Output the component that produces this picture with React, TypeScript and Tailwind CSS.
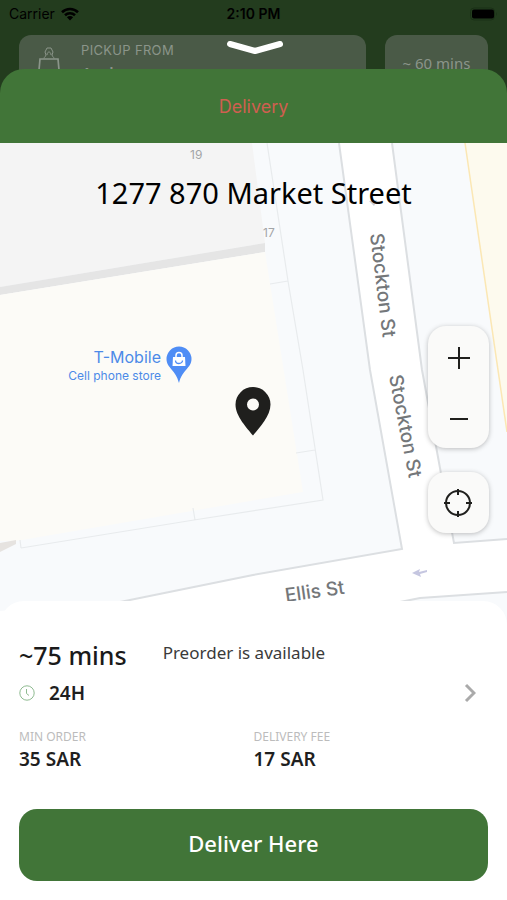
import type { ReactNode } from "react";

type StatProps = {
  label: string;
  value: string;
};

function WifiIcon() {
  return (
    <svg viewBox="0 0 18 14" className="h-[14px] w-[18px]" aria-hidden="true">
      <g fill="none" stroke="#000" strokeWidth="2.6">
        <path d="M1 5.2a11.6 11.6 0 0 1 16 0" />
        <path d="M4 8.3a7.3 7.3 0 0 1 10 0" />
      </g>
      <path d="M9 13.4 5.9 10.3a4.4 4.4 0 0 1 6.2 0z" fill="#000" />
    </svg>
  );
}

function BatteryIcon() {
  return (
    <svg viewBox="0 0 28 14" className="h-[14px] w-[28px]" aria-hidden="true">
      <rect x="0.5" y="1" width="24" height="12" rx="3.5" fill="none" stroke="#1a3016" />
      <rect x="2" y="2.5" width="22" height="9" rx="2" fill="#000" />
      <path d="M26 5v4q1.5-2 0-4z" fill="#1a3016" />
    </svg>
  );
}

function BagIcon() {
  return (
    <svg viewBox="0 0 24 36" className="h-9 w-6" fill="none" stroke="#8b958a" aria-hidden="true">
      <path d="M3 12h18l2 22H1z" strokeWidth="1.7" />
      <path d="M7 11.5c0-1.5 1.5-1.5 2-3.5l-1-3 2-4h4l2 4-1 3c.5 2 2 2 2 3.5" strokeWidth="1" />
      <path d="M10 8c0-2 1-3 2-3s2 1 2 3" strokeWidth="1" />
    </svg>
  );
}

function MapCanvas() {
  return (
    <svg
      viewBox="0 0 507 482"
      preserveAspectRatio="xMidYMin slice"
      className="absolute inset-0 h-full w-full"
      aria-hidden="true"
    >
      <rect width="507" height="482" fill="#f8fafc" />

      {/* Buildings */}
      <path d="M0 0h252l13 100L0 144z" fill="#f4f4f4" />
      <path d="M0 144l265-44v9L0 152z" fill="#e5e5e5" />
      <path d="M0 152l265-43 38 240L16 398H0z" fill="#fcfbf7" />
      <path d="M0 400l16-3v4L0 409z" fill="#e6e3e0" />
      <path d="M465 0l42 289V0z" fill="#fdfaee" />
      <path d="M465 0l42 289" fill="none" stroke="#fbe7b4" strokeWidth="1.5" />

      {/* Parcel outlines */}
      <path
        d="M267 0l21 138 15 89 20 130-129 20-173 28M270 141l18-3M296 310l19-3M193 365l2 12M20 397l1 8"
        fill="none"
        stroke="#e8ebed"
        strokeWidth="1.2"
      />

      {/* Streets */}
      <path
        d="M339 0h53l30 227 33 173 52-4v53l-87 6-18 4v23H0v-14l120-10 133-26 149-26-32-179z"
        fill="#ffffff"
      />
      <path
        d="M339 0l31 227 32 179-149 26-133 27-30 7M392 0l30 227 18 98 14 75 53-4M400 459l20-4 87-6"
        fill="none"
        stroke="#dcdfe2"
        strokeWidth="2"
      />

      {/* One-way arrows */}
      <path d="M412 430l8-4-1 3 8-2v2l-7 2 1 3z" fill="#c5c6e0" />
      <path d="M369 58l8-1-3 6z" fill="#c9ccd6" />

      <g className="font-['Inter',sans-serif] font-medium" fill="#74777a">
        <text fontSize="19" transform="translate(370 91) rotate(83)">
          Stockton St
        </text>
        <text fontSize="19" transform="translate(389 233) rotate(79)">
          Stockton St
        </text>
        <text fontSize="19" transform="translate(286 459) rotate(-8)">
          Ellis St
        </text>
      </g>
      <g className="font-['Inter',sans-serif]" fill="#a3a5a7" fontSize="12">
        <text x="190" y="16">
          19
        </text>
        <text x="263" y="94">
          17
        </text>
      </g>

      {/* Shop label and pin */}
      <g className="font-['Inter',sans-serif]" fill="#4c8ae8" textAnchor="end">
        <text x="161" y="220" fontSize="16">
          T-Mobile
        </text>
        <text x="161" y="237" fontSize="12">
          Cell phone store
        </text>
      </g>
      <path
        d="M179 203.5a12.5 12.5 0 0 1 12.5 12.5c0 9-9.5 11-12.5 24-3-13-12.5-15-12.5-24a12.5 12.5 0 0 1 12.5-12.5z"
        fill="#4f8df5"
      />
      <path d="M173 214h12l.5 9h-13z" fill="#fff" />
      <path d="M176 214.5v-2a3 3 0 0 1 6 0v2" fill="none" stroke="#fff" strokeWidth="1.5" />
      <path d="M175.5 217.5a3.5 3 0 0 0 7 0" fill="none" stroke="#4f8df5" strokeWidth="1.3" />

      {/* Drop-off pin */}
      <path
        d="M253 244a17.5 17.5 0 0 1 17.5 17.5c0 12-12 24-17.5 31-5.5-7-17.5-19-17.5-31A17.5 17.5 0 0 1 253 244zm0 11.5a6 6 0 1 0 0 12 6 6 0 0 0 0-12z"
        fill="#1f1f1d"
      />
    </svg>
  );
}

function MapButton({ label, children }: { label: string; children: ReactNode }) {
  return (
    <button
      type="button"
      aria-label={label}
      className="flex h-[61px] w-[61px] items-center justify-center text-[#1f1f1d]"
    >
      <svg
        viewBox="0 0 30 30"
        className="h-[30px] w-[30px]"
        fill="none"
        stroke="currentColor"
        strokeWidth="2"
        aria-hidden="true"
      >
        {children}
      </svg>
    </button>
  );
}

function Stat({ label, value }: StatProps) {
  return (
    <div>
      <dt className="text-[12px] leading-4 text-[#bcbcbc]">{label}</dt>
      <dd className="text-[19px] leading-7 font-semibold text-[#1f1f1f]">{value}</dd>
    </div>
  );
}

export default function App() {
  return (
    <div className="flex min-h-screen flex-col bg-[#233c1e] font-['Noto_Sans',sans-serif]">
      {/* Status bar */}
      <div className="grid h-[35px] grid-cols-3 items-start px-[9px] pt-1 font-['Inter',sans-serif] text-[14px] leading-5 text-black">
        <div className="flex items-center gap-[6px]">
          <span>Carrier</span>
          <WifiIcon />
        </div>
        <span className="text-center font-semibold">2:10 PM</span>
        <div className="flex h-5 items-center justify-end">
          <BatteryIcon />
        </div>
      </div>

      {/* Dimmed order header behind the sheet */}
      <header className="relative flex h-[68px] gap-[19px] px-[19px] text-[#8b958a]">
        <div className="flex flex-1 gap-5 rounded-t-[12px] bg-[#4a5a47] pt-2 pl-[18px]">
          <div className="pt-1">
            <BagIcon />
          </div>
          <div>
            <p className="font-['Inter',sans-serif] text-[13px] leading-[14px] tracking-wide">PICKUP FROM</p>
            <p className="pt-[5px] text-[18px] leading-6 font-medium">Arch start</p>
          </div>
        </div>
        <div className="w-[103px] rounded-t-[12px] bg-[#4a5a47] pt-4 text-center text-[15px] leading-6">
          ~ 60 mins
        </div>
        <button type="button" aria-label="Close" className="absolute top-[5px] left-1/2 -translate-x-1/2">
          <svg viewBox="0 0 58 16" className="h-4 w-[58px]" fill="none" aria-hidden="true">
            <path d="M5 4l25 7 25-7" stroke="#fff" strokeWidth="6" strokeLinecap="round" strokeLinejoin="round" />
          </svg>
        </button>
      </header>

      {/* Sheet */}
      <main className="relative -mt-[34px] flex flex-1 flex-col">
        <div className="flex h-[74px] items-center justify-center rounded-t-[24px] bg-[#417538] pt-[2px]">
          <h1 className="font-['Inter',sans-serif] text-[18px] leading-6 text-[#cf5f50]">Delivery</h1>
        </div>

        <section aria-label="Map" className="relative min-h-[482px] flex-1">
          <MapCanvas />
          <h2 className="relative pt-[30px] text-center text-[29px] leading-10 text-black">1277 870 Market Street</h2>
          <div className="absolute top-[183px] right-[18px] flex flex-col gap-6">
            <div className="rounded-[18px] bg-[#fafaf9] shadow-[0_1px_5px_rgba(0,0,0,0.25)]">
              <MapButton label="Zoom in">
                <path d="M15 5v22M4 16h22" />
              </MapButton>
              <MapButton label="Zoom out">
                <path d="M6 16h18" />
              </MapButton>
            </div>
            <div className="rounded-[18px] bg-[#fafaf9] shadow-[0_1px_5px_rgba(0,0,0,0.25)]">
              <MapButton label="My location">
                <circle cx="14" cy="15" r="12" />
                <path d="M14 1v6M14 23v6M0 15h6M22 15h6" />
              </MapButton>
            </div>
          </div>
        </section>

        <section aria-label="Delivery details" className="relative -mt-6 rounded-t-[24px] bg-white px-[19px] pt-10 pb-[19px]">
          <div className="flex items-start gap-9">
            <p className="text-[25px] leading-7 font-medium text-[#1a1a1a]">~75 mins</p>
            <p className="text-[17px] leading-6 text-[#3a3a3a]">Preorder is available</p>
          </div>

          <button type="button" className="mt-1 flex h-10 w-full items-center text-left">
            <svg viewBox="0 0 16 16" className="h-4 w-4" fill="none" stroke="#8fbb91" aria-hidden="true">
              <circle cx="8" cy="8" r="7.2" />
              <path d="M7.5 4v4.5l2.5 2" />
            </svg>
            <span className="flex-1 pl-[14px] text-[19px] leading-7 font-semibold text-[#1f1f1f]">24H</span>
            <svg viewBox="0 0 12 20" className="mr-3 h-5 w-3" fill="none" stroke="#aaaaaa" strokeWidth="3" aria-hidden="true">
              <path d="M2 2l8 8-8 8" />
            </svg>
          </button>

          <dl className="grid grid-cols-2 pt-4">
            <Stat label="MIN ORDER" value="35 SAR" />
            <Stat label="DELIVERY FEE" value="17 SAR" />
          </dl>

          <button
            type="button"
            className="mt-9 h-[72px] w-full rounded-[18px] bg-[#417538] pb-1 text-[22px] font-medium text-white"
          >
            Deliver Here
          </button>
        </section>
      </main>
    </div>
  );
}
